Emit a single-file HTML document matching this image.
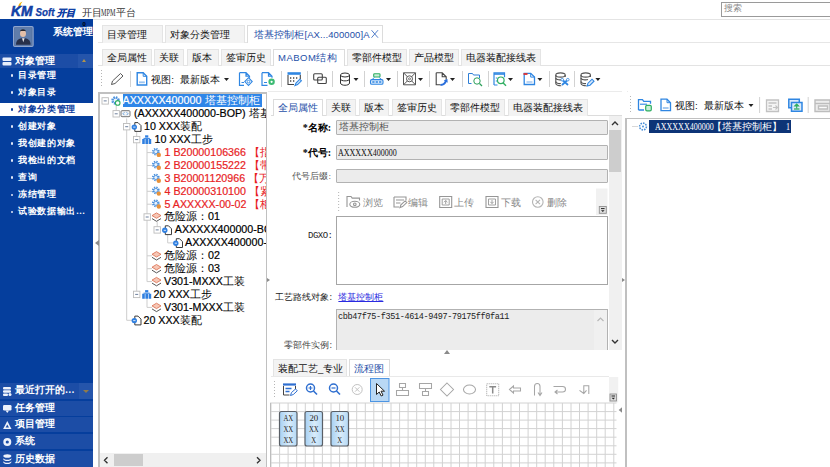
<!DOCTYPE html>
<html>
<head>
<meta charset="utf-8">
<style>
*{box-sizing:border-box;margin:0;padding:0}
html,body{width:830px;height:467px;overflow:hidden;background:#fff}
body{font-family:"Liberation Sans",sans-serif;font-size:10px;color:#000;position:relative}
.a{position:absolute;white-space:nowrap}
.sf{font-family:"Liberation Serif",serif}
.mf{font-family:"Liberation Mono",monospace}
/* sidebar */
#side{left:0;top:18.500px;width:93.250px;height:448px;background:#053e9d}
.sh{left:0;width:93.250px;height:15px;background:#1c4da6;color:#fff;font-weight:bold;font-size:9.5px;line-height:15px}
.sh span{position:absolute;left:15px;top:0;letter-spacing:0}
.si{left:0;width:93.250px;height:17px;color:#fff;font-weight:bold;font-size:9px;line-height:17px;letter-spacing:.6px}
.si i{position:absolute;left:10.500px;top:7.200px;width:2.600px;height:2.600px;border-radius:2px;background:#dfe6f5}
.si span{position:absolute;left:18.300px;top:0}
.si.sel{background:#fff;color:#0a3b9d}
.si.sel i{background:#0a3b9d}
/* tabs */
.tab{height:17px;background:#f3f3f3;border:1px solid #e4e4e4;border-bottom:none;font-size:9.5px;line-height:16px;text-align:left;padding-left:4px;color:#111}
.tab.on{background:#fff;color:#1e4fa8;border-color:#dcdcdc}
.sep{width:1px;height:16px;background:#c9c9c9}
.dd{width:0;height:0;border-left:2.5px solid transparent;border-right:2.5px solid transparent;border-top:3px solid #222}
.inp{background:#ececec;border:1px solid #b2b2b2;border-radius:1px;font-size:9.5px;line-height:13px;padding-left:2px;color:#222}
.lbl{font-size:10px;text-align:right;width:70px}
.tr{font-size:10.7px;line-height:13px;height:13px;-webkit-text-stroke:.2px currentColor}
.tr b{font-weight:normal;-webkit-text-stroke:0}
.red{color:#e8231f}
</style>
</head>
<body>
<!-- header -->
<div class="a" id="hdr" style="left:0;top:0;width:830px;height:19px;background:#fff"></div>
<div class="a" style="left:721px;top:1.500px;width:112px;height:15px;border:1px solid #9a9a9a;background:#fff"></div>
<div class="a sf" style="left:724px;top:2px;font-size:9px;color:#8a8a8a;line-height:12px">搜索</div>
<div class="a sf" style="left:82px;top:6.500px;font-size:9.500px;color:#333;line-height:12px">开目</div><div class="a sf" id="h2" style="left:101px;top:6.500px;font-size:9.500px;color:#333;line-height:12px;transform-origin:0 50%;transform:scaleX(.65)">MPM</div><div class="a sf" style="left:116px;top:6.500px;font-size:9.500px;color:#333;line-height:12px">平台</div>
<svg class="a" style="left:8px;top:0px" width="70" height="19" viewBox="8 0 70 19">
  <path d="M18 7.600Q18.300 3 22.500 1.600Q20 4 20.200 7.800Z" fill="#f2b400"/>
  <text x="11" y="16.300" font-family="Liberation Sans" font-style="italic" font-weight="bold" font-size="15.300" fill="#1241a6" stroke="#1241a6" stroke-width=".6" textLength="21.500" lengthAdjust="spacingAndGlyphs">KM</text>
  <text x="35.500" y="16.300" font-family="Liberation Sans" font-style="italic" font-weight="bold" font-size="10" fill="#1241a6" stroke="#1241a6" stroke-width=".25" textLength="19" lengthAdjust="spacingAndGlyphs">Soft</text>
  <text x="56.500" y="16" font-family="Liberation Sans" font-style="italic" font-weight="bold" font-size="9.200" fill="#1241a6" stroke="#1241a6" stroke-width=".35">开目</text>
</svg>
<div class="a" style="left:82.500px;top:21px;font-size:6px;line-height:6px;color:#000;z-index:4;font-weight:bold">0</div>

<!-- sidebar -->
<div class="a" id="side"></div>
<svg class="a" style="left:13px;top:25px" width="21" height="22" viewBox="0 0 21 22">
<rect x=".6" y="1.600" width="19.500" height="19.800" rx="1.200" fill="#4f6c9c" stroke="#8fa5cd" stroke-width="1.200"/>
<rect x="2" y="3" width="16.700" height="17" fill="#5f7dab"/>
<ellipse cx="10" cy="8.500" rx="3" ry="3.600" fill="#e3bfa8"/>
<path d="M6.800 7.200c0-4 6.400-4 6.400 0l-.5-1.200h-5.400z" fill="#2a2a30"/>
<path d="M3 19.700c0-5 3-6.500 7.300-6.500s7.300 1.500 7.300 6.500z" fill="#27304a"/>
<path d="M9 13.200h2.600l-1.300 4z" fill="#e9e9ee"/>
</svg>
<div class="a sf" style="left:52.5px;top:26px;font-size:10px;font-weight:bold;color:#fff;line-height:12px;letter-spacing:.3px">系统管理</div>

<div class="a sh" style="top:53.900px;height:14px;line-height:14px"><span class="sf">对象管理</span></div>
<div class="a" style="left:78px;top:53.900px;width:15.250px;height:14px;background:#2555ab"></div>
<div class="a" style="left:82px;top:59px;width:0;height:0;border-left:2.600px solid transparent;border-right:2.600px solid transparent;border-bottom:3px solid #b0934c"></div>
<svg class="a" style="left:2px;top:56.500px" width="10" height="9" viewBox="0 0 10 9"><rect x="0.5" y="0.5" width="9" height="3.5" rx="1" fill="#e8eefb"/><rect x="0.5" y="5" width="9" height="3.5" rx="1" fill="#e8eefb"/></svg>

<div class="a si sf" style="top:67.0px;background:none"><i></i><span>目录管理</span></div>
<div class="a si sf" style="top:84.0px;background:none"><i></i><span>对象目录</span></div>
<div class="a" style="left:0;top:103.400px;width:93.250px;height:13px;background:#fff"></div>
<div class="a si sf sel" style="top:101.1px;background:none"><i></i><span>对象分类管理</span></div>
<div class="a si sf" style="top:118.2px;background:none"><i></i><span>创建对象</span></div>
<div class="a si sf" style="top:135.2px;background:none"><i></i><span>我创建的对象</span></div>
<div class="a si sf" style="top:152.2px;background:none"><i></i><span>我检出的文档</span></div>
<div class="a si sf" style="top:169.3px;background:none"><i></i><span>查询</span></div>
<div class="a si sf" style="top:186.4px;background:none"><i></i><span>冻结管理</span></div>
<div class="a si sf" style="top:203.4px;background:none"><i></i><span>试验数据输出…</span></div>
<div class="a sh" style="top:383.3px;height:15.5px;line-height:15.5px"><svg class="a" style="left:3px;top:3px" width="9" height="10" viewBox="0 0 9 10"><rect x="0" y="1" width="8" height="2.600" rx="1" fill="#eef2fb"/><rect x="0" y="4.200" width="8" height="2.600" rx="1" fill="#eef2fb"/><rect x="0" y="7.400" width="5" height="2.600" rx="1" fill="#eef2fb"/><circle cx="7" cy="8.500" r="1.500" fill="#eef2fb"/></svg><span class="sf">最近打开的…</span></div>
<div class="a" style="left:78.700px;top:383.300px;width:14.550px;height:15.500px;background:#2555ab"></div>
<div class="a" style="left:82.500px;top:389.500px;width:0;height:0;border-left:3px solid transparent;border-right:3px solid transparent;border-top:3px solid #8f7b4c"></div>
<div class="a sh" style="top:400.6px;height:15.2px;line-height:15.2px"><svg class="a" style="left:3px;top:4px" width="9" height="9" viewBox="0 0 9 9"><rect x="0" y="0" width="8.500" height="5.500" rx="1.200" fill="#eef2fb"/><path d="M2.500 5.500h3.500l-1.700 2.500z" fill="#eef2fb"/></svg><span class="sf">任务管理</span></div>
<div class="a sh" style="top:417.3px;height:15.2px;line-height:15.2px"><svg class="a" style="left:3px;top:3px" width="9" height="10" viewBox="0 0 9 10"><path d="M4.300 1l4.200 8h-8.400z" fill="#eef2fb"/><path d="M4.300 4.500l1.700 3h-3.400z" fill="#1c4da6"/></svg><span class="sf">项目管理</span></div>
<div class="a sh" style="top:434px;height:15.4px;line-height:15.4px"><svg class="a" style="left:3px;top:3px" width="9" height="10" viewBox="0 0 9 10"><circle cx="4.300" cy="5" r="4" fill="#eef2fb"/><circle cx="4.300" cy="5" r="1.600" fill="#1c4da6"/></svg><span class="sf">系统</span></div>
<div class="a sh" style="top:450.8px;height:16.2px;line-height:16.2px"><svg class="a" style="left:3px;top:3px" width="9" height="10" viewBox="0 0 9 10"><ellipse cx="4.300" cy="2" rx="4" ry="1.800" fill="#eef2fb"/><path d="M.3 4c0 2.400 8 2.400 8 0v1.300c0 2.400-8 2.400-8 0zM.3 7c0 2.400 8 2.400 8 0v1.300c0 2.400-8 2.400-8 0z" fill="#eef2fb"/></svg><span class="sf">历史数据</span></div>

<!-- MAIN -->
<div class="a" id="main" style="left:93px;top:19px;width:737px;height:448px;background:#fff"></div>
<div class="a" style="left:93.250px;top:19px;width:737px;height:1px;background:#e4e4e4"></div>
<div class="a" style="left:93.250px;top:20px;width:5px;height:447px;background:#fff"></div>
<div class="a" style="left:94.700px;top:240px;width:0;height:0;border-top:3.750px solid transparent;border-bottom:3.750px solid transparent;border-right:4px solid #8c8c8c;z-index:5"></div>
<!-- top tabs -->
<div class="a" style="left:98px;top:42px;width:732px;height:1px;background:#e6e6e6"></div>
<div class="a tab" style="left:102px;top:25px;width:61px;height:18px;line-height:18px">目录管理</div>
<div class="a tab" style="left:165px;top:25px;width:80px;height:18px;line-height:18px">对象分类管理</div>
<div class="a tab on" style="left:247px;top:25px;width:136px;height:18px;line-height:18px;padding-left:6px;letter-spacing:.09px"><span id="t3">塔基控制柜[AX...400000]A</span></div>
<svg class="a" style="left:370px;top:29px" width="10" height="10" viewBox="0 0 10 10"><path d="M1.500 1.200l6.500 7.500M8 1.200l-6.500 7.500" stroke="#3f6fc4" stroke-width=".9" fill="none"/></svg>
<!-- 2nd tabs -->
<div class="a" style="left:98px;top:65px;width:732px;height:1px;background:#e3e3e3"></div>
<div class="a tab" style="left:102px;top:49px;width:50px">全局属性</div>
<div class="a tab" style="left:154px;top:49px;width:30px">关联</div>
<div class="a tab" style="left:187px;top:49px;width:32px">版本</div>
<div class="a tab" style="left:221px;top:49px;width:50px">签审历史</div>
<div class="a tab on" style="left:273px;top:49px;width:72px"><span id="mb" style="letter-spacing:.5px">MABOM结构</span></div>
<div class="a tab" style="left:347px;top:49px;width:60px">零部件模型</div>
<div class="a tab" style="left:409px;top:49px;width:50px">产品模型</div>
<div class="a tab" style="left:461px;top:49px;width:80px">电器装配接线表</div>
<!-- toolbar 1 -->
<div class="a" style="left:98px;top:66px;width:732px;height:25px;background:#fff"></div>
<svg class="a" id="tb1" style="left:98px;top:66px" width="520" height="25" viewBox="98 66 520 25" fill="none" stroke-width="1">
<g stroke="#b5b5b5"><path d="M101.5 70v1M101.5 73v1M101.5 76v1M101.5 79v1M101.5 82v1M101.5 85v1"/></g>
<g stroke="#d2d2d2"><path d="M130.5 71v16M281.5 71v16M307.5 71v16M332.5 71v16M364.5 71v16M397.5 71v16M429.5 71v16M462.5 71v16M488.5 71v16M549.5 71v16M574.5 71v16"/></g>
<!-- pencil -->
<path d="M111.500 84.500l1-3.500 8-7.500 2.500 2.500-8 7.500z" stroke="#444" stroke-width=".9"/>
<!-- doc -->
<path d="M137.200 72.800h6l3.500 3.500v8.700h-9.500z" stroke="#2f86e2" stroke-width="1.400" fill="#fff"/><path d="M143.200 72.800v3.500h3.500" stroke="#2f86e2"/><path d="M139 82.300h5.800" stroke="#9cc5f0" stroke-width="1.800"/>
<!-- doc gear -->
<path d="M239.500 72.700h6.500l3.500 3.500v1.500M239.500 72.700v12.600h4.500M246 72.700v3.500h3.500M241.500 82.500h2.500" stroke="#2f86e2" stroke-width="1.200"/><path d="M248.500 77.700l3.700 3.900-3.700 3.900-3.700-3.900z" stroke="#2f86e2" stroke-width="1.100" fill="#fff"/><circle cx="248.500" cy="81.600" r="1.300" stroke="#2f86e2" stroke-width=".9"/>
<!-- doc green -->
<path d="M262 72.700h6.500l3.500 3.500v1.500M262 72.700v12.600h5.500M268.500 72.700v3.500h3.500M264 82.500h3" stroke="#2f86e2" stroke-width="1.200"/><circle cx="271.600" cy="81.800" r="3.200" fill="#3dbb74"/><circle cx="271.600" cy="81.800" r="1.100" fill="#fff"/>
<!-- calendar -->
<path d="M288 75v9.500h6M300.300 75v4" stroke="#444" stroke-width="1.100"/><path d="M287.500 73.500h13.300" stroke="#2f86e2" stroke-width="2.600"/><path d="M290 78h1.300M293 78h1.300M296 78h1.300M290 81h1.300M293 81h1.300" stroke="#444" stroke-width="1.400"/><path d="M295 85.500l1-2.500 3.800-3.800 1.600 1.600-3.800 3.800z" stroke="#2f86e2" stroke-width="1.100" fill="#cfe4fa"/>
<!-- two squares -->
<rect x="313.700" y="73.800" width="8.600" height="6.200" rx="1" stroke="#444" stroke-width="1.100"/><rect x="317.700" y="77.300" width="8.600" height="6.200" rx="1" stroke="#444" stroke-width="1.100"/>
<!-- cylinder -->
<path d="M340.500 75v8c0 3 9 3 9 0v-8" stroke="#333"/><ellipse cx="345" cy="75" rx="4.500" ry="2" stroke="#333"/><path d="M340.500 79c0 2.500 9 2.500 9 0" stroke="#333"/>
<!-- org -->
<rect x="373.700" y="73.800" width="6.300" height="3.200" rx=".8" stroke="#2fae62" stroke-width="1.100" fill="#c9efd8"/><path d="M374.500 77.500l-2.500 2h9.700l-2.500-2" stroke="#2f86e2" stroke-width=".9"/><rect x="370.500" y="79.600" width="12.500" height="4.600" rx="1.300" stroke="#2f86e2" stroke-width="1.100" fill="#d9e9fb"/><path d="M372.300 81.200h2.200v1.600h-2.200zM375.700 81.200h2.200v1.600h-2.200zM379.100 81.200h2.200v1.600h-2.200z" fill="#2f86e2" stroke="none"/>
<!-- box X -->
<path d="M403.500 72.800h12v12h-12zM403.500 72.800l12 12M415.500 72.800l-12 12" stroke="#555" stroke-width="1"/><circle cx="409.500" cy="78.800" r="3" stroke="#555" fill="#fff"/><circle cx="409.500" cy="78.800" r="1" stroke="#555" stroke-width=".8"/>
<!-- doc arrow -->
<path d="M436.200 72.800h6l4 4v3M436.200 72.800v12h4.500M442.200 72.800v4h4" stroke="#444" stroke-width="1.100"/><path d="M440.500 85q4.500-.3 5.500-4.500" stroke="#2a6fdc" stroke-width="2"/><path d="M443.800 80.200l3.600-1.200.3 3.800z" fill="#2a6fdc" stroke="none"/>
<!-- folder search -->
<path d="M468.500 83.500v-10h4l1 1.500h6v3" stroke="#2f7fd6"/><path d="M468.500 83.500h3" stroke="#2f7fd6"/><circle cx="477" cy="81" r="3.200" stroke="#2ca05a"/><path d="M479.500 83.500l2.500 2.500" stroke="#2ca05a" stroke-width="1.300"/>
<!-- doc search -->
<path d="M494 85v-12.200h10.500v4.500M494 85h3.500" stroke="#2f86e2" stroke-width="1.200"/><path d="M494 74h10.500" stroke="#2f86e2" stroke-width="1.600"/><path d="M495.800 78h1.500M495.800 81h1.500" stroke="#2f86e2"/><circle cx="500.800" cy="80.300" r="3.300" stroke="#2fae62" stroke-width="1.200"/><path d="M503.200 82.900l2.800 2.800" stroke="#2fae62" stroke-width="1.400"/>
<!-- doc red -->
<path d="M524.200 73.300h6.500l3.800 3.800v7.400h-10.300z" stroke="#2f86e2" stroke-width="1.300"/><path d="M530.700 73.300v3.800h3.800" stroke="#2f86e2" stroke-width="1"/><path d="M523.500 74h4" stroke="#e03030" stroke-width="1.800"/><path d="M526.500 82h6" stroke="#8db9ec" stroke-width="1.200"/>
<!-- db tools -->
<g stroke="#555" stroke-width="1.100"><path d="M555.800 75v8.500c0 1.700 3 2.400 5.500 2.300M565.200 75v2"/><ellipse cx="560.500" cy="75" rx="4.700" ry="2.100"/><path d="M555.800 78c0 1.800 5 2.300 7 1.500M555.800 81.500c0 1.800 3 2.300 5 2"/></g><path d="M562 79.500l6 5.500M568 79.500l-6 5.500" stroke="#2f86e2" stroke-width="1.700"/><circle cx="562.200" cy="79.700" r="1.300" fill="#fff" stroke="#2f86e2" stroke-width=".8"/><circle cx="567.800" cy="79.700" r="1.300" fill="#fff" stroke="#2f86e2" stroke-width=".8"/>
<!-- db pencil -->
<g stroke="#555" stroke-width="1.100"><path d="M581 75v8.500c0 1.700 3 2.400 5.500 2.300M590.400 75v2"/><ellipse cx="585.700" cy="75" rx="4.700" ry="2.100"/><path d="M581 78c0 1.800 5 2.300 7 1.500M581 81.500c0 1.800 3 2.300 5 2"/></g><path d="M587.200 86l.8-2.800 4-4 2 2-4 4z" stroke="#2f86e2" stroke-width="1.100" fill="#d9e9fb"/>
<!-- arrows -->
<g fill="#222" stroke="none"><path d="M224 78h5l-2.500 3z"/><path d="M353.500 78h5l-2.500 3z"/><path d="M386 78h5l-2.500 3z"/><path d="M418 78h5l-2.500 3z"/><path d="M450 78h5l-2.500 3z"/><path d="M508 78h5l-2.500 3z"/><path d="M537.400 78h5l-2.500 3z"/><path d="M595.400 78h5l-2.500 3z"/></g>
</svg>
<div class="a" id="v1" style="left:151.300px;top:72.500px;font-size:9.750px;line-height:14px;color:#111">视图:</div><div class="a" id="v2" style="left:180.300px;top:72.500px;font-size:9.750px;line-height:14px;color:#111;letter-spacing:.05px">最新版本</div>
<div class="a" style="left:268px;top:91.300px;width:562px;height:1px;background:#ebebeb"></div>
<!-- TREE -->
<div class="a" style="left:98.200px;top:92.300px;width:169.200px;height:375px;background:#c0c0c0"></div><div class="a" style="left:99.600px;top:93.500px;width:166.600px;height:375px;background:#fff"></div>
<div class="a" id="treeclip" style="left:100px;top:93px;width:166px;height:360px;overflow:hidden">
<svg class="a" style="left:0;top:0" width="166" height="362" viewBox="100 93 166 362" fill="none"><g stroke="#cdcdcd" stroke-width="1"><path d="M116.2 105.5L116.2 113.4"/><path d="M126.7 118.4L126.7 320.3"/><path d="M126.7 320.3L132 320.3"/><path d="M136.7 131.3L136.7 294.0"/><path d="M147 144.2L147 281.6"/><path d="M147 152.6L152.5 152.6"/><path d="M147 165.5L152.5 165.5"/><path d="M147 178.4L152.5 178.4"/><path d="M147 191.3L152.5 191.3"/><path d="M147 204.2L152.5 204.2"/><path d="M147 255.8L152 255.8"/><path d="M147 268.7L152 268.7"/><path d="M147 281.6L152 281.6"/><path d="M157.2 221.6L157.2 229.5"/><path d="M167.7 234.5L167.7 242.9"/><path d="M167.7 242.9L173.5 242.9"/><path d="M147 299.0L147 307.4"/><path d="M147 307.4L152 307.4"/></g><rect x="102.0" y="97.7" width="6.400" height="6.400" fill="#fff" stroke="#bcbcbc" stroke-width=".9"/><path d="M103.7 100.9h3" stroke="#6d7f9c" stroke-width="1"/><circle cx="115.5" cy="100.5" r="3.300" stroke="#4a90dc" stroke-width="1.900" stroke-dasharray="1.500 1.100"/><circle cx="115.5" cy="100.5" r="2.400" stroke="#4a90dc" stroke-width=".9" fill="#eaf3fc"/><circle cx="117.7" cy="102.9" r="2.300" fill="#fff" stroke="#2fae62" stroke-width="1.100"/><rect x="113.0" y="110.6" width="6.400" height="6.400" fill="#fff" stroke="#bcbcbc" stroke-width=".9"/><path d="M114.7 113.8h3" stroke="#6d7f9c" stroke-width="1"/><rect x="121.0" y="110.7" width="9" height="6" rx="1" stroke="#666" fill="#f4f4f4" stroke-width=".9"/><path d="M124.5 112.2l-1.500 1.500 1.500 1.500M126.5 112.2l1.500 1.500 -1.500 1.500" stroke="#4a90dc" stroke-width=".8"/><rect x="123.5" y="123.5" width="6.400" height="6.400" fill="#fff" stroke="#bcbcbc" stroke-width=".9"/><path d="M125.2 126.7h3" stroke="#6d7f9c" stroke-width="1"/><path d="M134.8 122.6h3.200l3 3v5.800h-6.200z" stroke="#333" fill="#fff" stroke-width=".95"/><circle cx="134.3" cy="127.1" r="2.700" fill="#2f7fe0"/><path d="M133.2 127.1h2.300" stroke="#fff" stroke-width=".8"/><rect x="133.5" y="136.4" width="6.400" height="6.400" fill="#fff" stroke="#bcbcbc" stroke-width=".9"/><path d="M135.2 139.6h3" stroke="#6d7f9c" stroke-width="1"/><path d="M145.1 135.29999999999998h3.200v2.300h-3.200z" fill="#2f7fe0"/><path d="M142.2 139.0h2.600v4.900h-2.600zM145.39999999999998 139.0h2.600v4.900h-2.600zM148.6 139.0h2.600v4.900h-2.600z" fill="#2f7fe0"/><path d="M143.5 138.39999999999998h6.400" stroke="#2f7fe0" stroke-width="1"/><circle cx="155.8" cy="151.7" r="2.900" stroke="#4a90dc" stroke-width="1.900" stroke-dasharray="1.300 1"/><circle cx="155.8" cy="151.7" r="2" stroke="#4a90dc" stroke-width=".9" fill="#eaf3fc"/><circle cx="158.8" cy="154.9" r="2.200" fill="#e8923a"/><circle cx="155.8" cy="164.6" r="2.900" stroke="#4a90dc" stroke-width="1.900" stroke-dasharray="1.300 1"/><circle cx="155.8" cy="164.6" r="2" stroke="#4a90dc" stroke-width=".9" fill="#eaf3fc"/><circle cx="158.8" cy="167.8" r="2.200" fill="#e8923a"/><circle cx="155.8" cy="177.5" r="2.900" stroke="#4a90dc" stroke-width="1.900" stroke-dasharray="1.300 1"/><circle cx="155.8" cy="177.5" r="2" stroke="#4a90dc" stroke-width=".9" fill="#eaf3fc"/><circle cx="158.8" cy="180.70000000000002" r="2.200" fill="#e8923a"/><circle cx="155.8" cy="190.4" r="2.900" stroke="#4a90dc" stroke-width="1.900" stroke-dasharray="1.300 1"/><circle cx="155.8" cy="190.4" r="2" stroke="#4a90dc" stroke-width=".9" fill="#eaf3fc"/><circle cx="158.8" cy="193.60000000000002" r="2.200" fill="#e8923a"/><circle cx="155.8" cy="203.29999999999998" r="2.900" stroke="#4a90dc" stroke-width="1.900" stroke-dasharray="1.300 1"/><circle cx="155.8" cy="203.29999999999998" r="2" stroke="#4a90dc" stroke-width=".9" fill="#eaf3fc"/><circle cx="158.8" cy="206.5" r="2.200" fill="#e8923a"/><rect x="144.0" y="213.8" width="6.400" height="6.400" fill="#fff" stroke="#bcbcbc" stroke-width=".9"/><path d="M145.7 217.0h3" stroke="#6d7f9c" stroke-width="1"/><path d="M152.0 215.60000000000002l4.500 -2.700 4.500 2.700 -4.500 2.700z" fill="#f6c7b6" stroke="#d9694a" stroke-width=".8"/><path d="M152.0 218.60000000000002l4.500 2.700 4.500 -2.700" stroke="#444" stroke-width=".9"/><rect x="154.0" y="226.7" width="6.400" height="6.400" fill="#fff" stroke="#bcbcbc" stroke-width=".9"/><path d="M155.7 229.9h3" stroke="#6d7f9c" stroke-width="1"/><path d="M165.3 225.8h3.200l3 3v5.800h-6.200z" stroke="#333" fill="#fff" stroke-width=".95"/><circle cx="164.8" cy="230.3" r="2.700" fill="#2f7fe0"/><path d="M163.7 230.3h2.300" stroke="#fff" stroke-width=".8"/><path d="M176.3 238.70000000000002h3.200l3 3v5.800h-6.200z" stroke="#333" fill="#fff" stroke-width=".95"/><circle cx="175.8" cy="243.20000000000002" r="2.700" fill="#2f7fe0"/><path d="M174.7 243.20000000000002h2.300" stroke="#fff" stroke-width=".8"/><path d="M152.0 254.3l4.500 -2.700 4.500 2.700 -4.500 2.700z" fill="#f6c7b6" stroke="#d9694a" stroke-width=".8"/><path d="M152.0 257.3l4.500 2.700 4.500 -2.700" stroke="#444" stroke-width=".9"/><path d="M152.0 267.20000000000005l4.500 -2.700 4.500 2.700 -4.500 2.700z" fill="#f6c7b6" stroke="#d9694a" stroke-width=".8"/><path d="M152.0 270.20000000000005l4.500 2.700 4.500 -2.700" stroke="#444" stroke-width=".9"/><path d="M152.0 280.1l4.500 -2.700 4.500 2.700 -4.500 2.700z" fill="#f6c7b6" stroke="#d9694a" stroke-width=".8"/><path d="M152.0 283.1l4.500 2.700 4.500 -2.700" stroke="#444" stroke-width=".9"/><rect x="133.5" y="291.2" width="6.400" height="6.400" fill="#fff" stroke="#bcbcbc" stroke-width=".9"/><path d="M135.2 294.4h3" stroke="#6d7f9c" stroke-width="1"/><path d="M145.1 290.1h3.200v2.300h-3.200z" fill="#2f7fe0"/><path d="M142.2 293.8h2.600v4.900h-2.600zM145.39999999999998 293.8h2.600v4.900h-2.600zM148.6 293.8h2.600v4.900h-2.600z" fill="#2f7fe0"/><path d="M143.5 293.2h6.400" stroke="#2f7fe0" stroke-width="1"/><path d="M152.0 305.9l4.500 -2.700 4.500 2.700 -4.500 2.700z" fill="#f6c7b6" stroke="#d9694a" stroke-width=".8"/><path d="M152.0 308.9l4.500 2.700 4.500 -2.700" stroke="#444" stroke-width=".9"/><path d="M134.8 316.1h3.200l3 3v5.800h-6.200z" stroke="#333" fill="#fff" stroke-width=".95"/><circle cx="134.3" cy="320.6" r="2.700" fill="#2f7fe0"/><path d="M133.2 320.6h2.300" stroke="#fff" stroke-width=".8"/></svg>
<div class="a tr" style="left:22.5px;top:1.3px"><span style="background:#2f86e8;color:#fff;display:inline-block;height:12.5px;line-height:12.5px;padding-right:2px;letter-spacing:.05px">AXXXXX400000 <b class="sf">塔基控制柜</b></span></div>
<div class="a tr" style="left:34px;top:14.2px">(AXXXXX400000-BOP) <b class="sf">塔基控制柜</b></div>
<div class="a tr" style="left:44px;top:27.1px">10 XXX<b class="sf">装配</b></div>
<div class="a tr" style="left:54.5px;top:40.0px">10 XXX<b class="sf">工步</b></div>
<div class="a tr" style="left:64.5px;top:52.9px"><span class="red">1 B20000106366 <b class="sf">【指示灯</b></span></div>
<div class="a tr" style="left:64.5px;top:65.8px"><span class="red">2 B20000155222 <b class="sf">【带灯按</b></span></div>
<div class="a tr" style="left:64.5px;top:78.7px"><span class="red">3 B20001120966 <b class="sf">【万能转</b></span></div>
<div class="a tr" style="left:64.5px;top:91.6px"><span class="red">4 B20000310100 <b class="sf">【紧固件</b></span></div>
<div class="a tr" style="left:64.5px;top:104.5px"><span class="red">5 AXXXXX-00-02 <b class="sf">【柜体</b></span></div>
<div class="a tr" style="left:64px;top:117.4px"><b class="sf">危险源：</b>01</div>
<div class="a tr" style="left:74.80000000000001px;top:130.3px">AXXXXX400000-BOP</div>
<div class="a tr" style="left:85px;top:143.2px">AXXXXX400000-BOP1</div>
<div class="a tr" style="left:64px;top:156.1px"><b class="sf">危险源：</b>02</div>
<div class="a tr" style="left:64px;top:169.0px"><b class="sf">危险源：</b>03</div>
<div class="a tr" style="left:64px;top:181.9px">V301-MXXX<b class="sf">工装</b></div>
<div class="a tr" style="left:53.5px;top:194.8px">20 XXX<b class="sf">工步</b></div>
<div class="a tr" style="left:64px;top:207.7px">V301-MXXX<b class="sf">工装</b></div>
<div class="a tr" style="left:43.5px;top:220.6px">20 XXX<b class="sf">装配</b></div>
</div>
<div class="a" style="left:99.600px;top:453px;width:166.600px;height:14px;background:#f0f0f0"></div>
<div class="a" style="left:114px;top:453.700px;width:29.300px;height:12px;background:#cdcdcd"></div>
<svg class="a" style="left:100px;top:454px" width="166" height="12" viewBox="0 0 166 12" fill="none" stroke="#333" stroke-width="1.400"><path d="M7.500 3.200l-3 3 3 3M157 3.200l3 3-3 3"/></svg>
<div class="a" style="left:266.500px;top:277.700px;width:0;height:0;border-top:2.600px solid transparent;border-bottom:2.600px solid transparent;border-left:3.500px solid #8a8a8a;z-index:5"></div>
<!-- MID -->
<div class="a" style="left:271px;top:115px;width:352px;height:1px;background:#dcdcdc"></div>
<div class="a tab on" style="left:273px;top:99px;width:50px;height:17px;line-height:16px">全局属性</div>
<div class="a tab" style="left:326px;top:99px;width:30px;height:17px;line-height:16px">关联</div>
<div class="a tab" style="left:359px;top:99px;width:30px;height:17px;line-height:16px">版本</div>
<div class="a tab" style="left:392px;top:99px;width:50px;height:17px;line-height:16px">签审历史</div>
<div class="a tab" style="left:445px;top:99px;width:60px;height:17px;line-height:16px">零部件模型</div>
<div class="a tab" style="left:508px;top:99px;width:80px;height:17px;line-height:16px">电器装配接线表</div>
<div class="a" style="left:271px;top:116px;width:339px;height:233.500px;background:#fff"></div>
<!-- v scrollbar -->
<div class="a" style="left:608.600px;top:116px;width:13.100px;height:233.500px;background:#f0f0f0"></div>
<div class="a" style="left:609.300px;top:130.300px;width:11.900px;height:42px;background:#cdcdcd"></div>
<svg class="a" style="left:609.200px;top:116px" width="12" height="234" viewBox="0 0 12 234" fill="none" stroke="#333" stroke-width="1.4"><path d="M3 9l3-3 3 3M3 224l3 3 3-3"/></svg>
<!-- fields -->
<div class="a sf" style="left:261px;top:121px;width:70px;text-align:right;font-size:10px;font-weight:bold;line-height:13px">*名称:</div>
<div class="a inp sf" style="left:336px;top:120px;width:272px;height:15px;color:#555">塔基控制柜</div>
<div class="a sf" style="left:261px;top:146px;width:70px;text-align:right;font-size:10px;font-weight:bold;line-height:13px">*代号:</div>
<div class="a inp sf" style="left:336px;top:144.500px;width:272px;height:15px"></div>
<div class="a sf" id="f2" style="left:337.500px;top:145.500px;color:#111;font-size:10px;line-height:13px;transform-origin:0 50%;transform:scaleX(.8)">AXXXXX400000</div>
<div class="a sf" style="left:261px;top:170px;width:70px;text-align:right;font-size:9.200px;line-height:13px;color:#555">代号后缀:</div>
<div class="a inp" style="left:336px;top:168.500px;width:272px;height:14.500px"></div>
<!-- mini toolbar -->
<svg class="a" style="left:336px;top:188px" width="272" height="28" viewBox="336 188 272 28" fill="none" stroke="#969696" stroke-width="1.100">
<rect x="596" y="188.500" width="11.500" height="26.500" fill="#f1f1f1" stroke="none"/>
<path d="M338.600 192v1M338.600 195v1M338.600 198v1M338.600 201v1M338.600 204v1M338.600 207v1M338.600 210v1" stroke="#bbb"/>
<path d="M347 207v-10.500h4l1.200 1.600h7.300v2.500"/><ellipse cx="354.800" cy="204.300" rx="5" ry="3"/><circle cx="354.800" cy="204.300" r="1.300"/>
<path d="M394 197h12v3.500M394 197v10h5M396 200h8M396 203h4.500"/><path d="M400 207.500l.9-2.600 4.200-4 1.700 1.700-4.200 4z"/>
<path d="M439.700 196.500h12v11h-12z"/><path d="M442.200 199h7v6h-7z" stroke-width=".9"/><path d="M445.700 204v-3.500M444 202.200l1.700-1.700 1.700 1.700" stroke-width=".9"/>
<path d="M486 196.500h12v11h-12z"/><path d="M488.500 199h7v6h-7z" stroke-width=".9"/><path d="M492 200v3.500M490.300 201.800l1.700 1.700 1.700-1.700" stroke-width=".9"/>
<circle cx="537.800" cy="202" r="5.300" stroke="#b5b5b5"/><path d="M535.600 199.800l4.400 4.400M540 199.800l-4.400 4.400" stroke="#b5b5b5"/>
<rect x="599.300" y="206.500" width="7" height="6.800" fill="#e0e0e0" stroke="#8f8f8f" stroke-width=".9"/><path d="M601 208.600h3.600" stroke="#222" stroke-width="1"/><path d="M601 210.200h3.600l-1.800 1.900z" fill="#222" stroke="none"/>
</svg>
<div class="a" style="left:362.500px;top:196.500px;font-size:9.5px;line-height:12px;color:#8a8a8a">浏览</div>
<div class="a" style="left:408.300px;top:196.500px;font-size:9.5px;line-height:12px;color:#8a8a8a">编辑</div>
<div class="a" style="left:454.300px;top:196.500px;font-size:9.5px;line-height:12px;color:#8a8a8a">上传</div>
<div class="a" style="left:500.700px;top:196.500px;font-size:9.5px;line-height:12px;color:#8a8a8a">下载</div>
<div class="a" style="left:547px;top:196.500px;font-size:9.5px;line-height:12px;color:#8a8a8a">删除</div>
<div class="a" style="left:336px;top:216px;width:272px;height:69px;background:#fff;border:1px solid #a6a6a6"></div>
<div class="a mf" style="left:308px;top:230px;font-size:9px;line-height:12px;color:#222;letter-spacing:-.5px">DGXO:</div>
<div class="a sf" style="left:262px;top:291px;width:70px;text-align:right;font-size:9.300px;line-height:13px;color:#222">工艺路线对象:</div>
<div class="a sf" style="left:338.400px;top:291px;font-size:9.300px;line-height:13px;color:#2a2ae0;text-decoration:underline">塔基控制柜</div>
<div class="a" style="left:336px;top:309px;width:272px;height:40.500px;background:#ececec;border:1px solid #b2b2b2;border-bottom:none"></div>
<div class="a mf" style="left:338px;top:311px;font-size:8.5px;line-height:12px;color:#222;letter-spacing:-.35px">cbb47f75-f351-4614-9497-79175ff0fa11</div>
<div class="a" style="left:593.500px;top:310px;width:13.500px;height:39.500px;background:#f0f0f0"></div><svg class="a" style="left:593px;top:310px" width="14" height="40" viewBox="0 0 14 40" fill="none" stroke="#b8b8b8" stroke-width="1.200"><path d="M4.500 11l3-3 3 3"/></svg>
<div class="a sf" style="left:262px;top:339px;width:70px;text-align:right;font-size:9.300px;line-height:13px;color:#444">零部件实例:</div>
<!-- splitter -->
<div class="a" style="left:271px;top:349.500px;width:352px;height:10px;background:#fff"></div>
<div class="a" style="left:443.500px;top:350px;width:0;height:0;border-left:3.5px solid transparent;border-right:3.5px solid transparent;border-bottom:4px solid #8a8a8a"></div>
<!-- lower tabs -->
<div class="a" style="left:271px;top:359px;width:352px;height:18px;background:#fff"></div>
<div class="a tab" style="left:273px;top:359px;width:74px;height:17px;line-height:18px">装配工艺_专业</div>
<div class="a tab on" style="left:349px;top:359px;width:41px;height:17px;line-height:18px">流程图</div>
<div class="a" style="left:271px;top:376px;width:338px;height:1px;background:#e9e9e9"></div>
<svg class="a" id="tb2" style="left:270px;top:377px" width="353" height="90" viewBox="270 377 353 90" fill="none">
<defs><linearGradient id="ng" x1="0" x2="1" y1="0" y2="0"><stop offset="0" stop-color="#a6d0f3"/><stop offset=".55" stop-color="#d9ecfa"/><stop offset="1" stop-color="#b4d8f5"/></linearGradient></defs>
<rect x="270" y="403" width="346.500" height="64" fill="#fff"/><rect x="609" y="376.700" width="9.200" height="25.700" fill="#f1f1f1"/>
<path d="M271.0 403V467M279.6 403V467M288.1 403V467M296.7 403V467M305.3 403V467M313.9 403V467M322.4 403V467M331.0 403V467M339.6 403V467M348.1 403V467M356.7 403V467M365.3 403V467M373.8 403V467M382.4 403V467M391.0 403V467M399.6 403V467M408.1 403V467M416.7 403V467M425.3 403V467M433.8 403V467M442.4 403V467M451.0 403V467M459.5 403V467M468.1 403V467M476.7 403V467M485.2 403V467M493.8 403V467M502.4 403V467M511.0 403V467M519.5 403V467M528.1 403V467M536.7 403V467M545.2 403V467M553.8 403V467M562.4 403V467M571.0 403V467M579.5 403V467M588.1 403V467M596.7 403V467M605.2 403V467M613.8 403V467M270 403.0H616.500M270 411.6H616.500M270 420.1H616.500M270 428.6H616.500M270 437.2H616.500M270 445.8H616.500M270 454.3H616.500M270 462.9H616.500" stroke="#d2d2d2" stroke-width="1"/>
<path d="M270.500 403v64" stroke="#bdbdbd"/>
<g stroke="#5a5f66" stroke-width="1.200" fill="url(#ng)"><rect x="279.500" y="411.500" width="17.500" height="34.500" rx="2"/><rect x="305" y="411.500" width="17.500" height="34.500" rx="2"/><rect x="331" y="411.500" width="17.500" height="34.500" rx="2"/></g>
<g font-family="Liberation Serif" font-size="9" fill="#222" text-anchor="middle" stroke="none">
<text x="288.300" y="420.500" textLength="9.8" lengthAdjust="spacingAndGlyphs">AX</text><text x="288.300" y="431.500" textLength="9.8" lengthAdjust="spacingAndGlyphs">XX</text><text x="288.300" y="442.500" textLength="9.8" lengthAdjust="spacingAndGlyphs">XX</text>
<text x="313.800" y="420.500" textLength="8.8" lengthAdjust="spacingAndGlyphs">20</text><text x="313.800" y="431.500" textLength="9.8" lengthAdjust="spacingAndGlyphs">XX</text><text x="313.800" y="442.500" textLength="4.9" lengthAdjust="spacingAndGlyphs">X</text>
<text x="339.800" y="420.500" textLength="8.8" lengthAdjust="spacingAndGlyphs">10</text><text x="339.800" y="431.500" textLength="9.8" lengthAdjust="spacingAndGlyphs">XX</text><text x="339.800" y="442.500" textLength="4.9" lengthAdjust="spacingAndGlyphs">X</text></g>
<path d="M274.500 381v1M274.500 384v1M274.500 387v1M274.500 390v1M274.500 393v1M274.500 396v1" stroke="#b5b5b5"/>
<!-- icon1 -->
<path d="M283 384.500h13" stroke="#2f6fd0" stroke-width="2.200"/><path d="M283.500 386v9h6M295.500 386v3" stroke="#444"/><path d="M285.500 388.500h6M285.500 391.500h4" stroke="#2f6fd0" stroke-width="1.300"/><path d="M290.500 395.500l1-3 4-3.500 1.800 1.800-4 3.700z" stroke="#2f6fd0"/>
<!-- zoom in/out -->
<circle cx="310.500" cy="388" r="4" stroke="#2f6fd0" stroke-width="1.500"/><path d="M313.500 391l3.500 3.500" stroke="#2f6fd0" stroke-width="1.600"/><path d="M308.500 388h4M310.500 386v4" stroke="#2f6fd0" stroke-width="1.200"/>
<circle cx="333.500" cy="388" r="4" stroke="#2f6fd0" stroke-width="1.500"/><path d="M336.500 391l3.500 3.500" stroke="#2f6fd0" stroke-width="1.600"/><path d="M331.500 388h4" stroke="#2f6fd0" stroke-width="1.200"/>
<circle cx="357.200" cy="389.500" r="5" stroke="#c2c2c2"/><path d="M355 387.300l4.400 4.400M359.400 387.300l-4.400 4.400" stroke="#c2c2c2"/>
<rect x="370.500" y="378.500" width="18.500" height="23" fill="#b9d8f5" stroke="#4d95e3"/>
<path d="M376.500 383.500v11l2.700-2.500 2 4 1.800-.9-2-3.900h3.500z" fill="#fff" stroke="#222" stroke-width="1"/>
<g stroke="#a6a6a6" stroke-width="1.050">
<path d="M399.500 383.500h6v4h-6zM402.500 387.500v3M396.500 390.500h12v5h-12z"/>
<path d="M419.500 383.500h12v5h-12zM425.500 388.500v3M422.500 391.500h6v4h-6z"/>
<path d="M447 383l6.500 6.500-6.500 6.500-6.500-6.500z"/>
<ellipse cx="469.500" cy="389.500" rx="6" ry="4.500"/>
<path d="M486.700 383.700h12v12h-12z" stroke-dasharray="1 1"/><path d="M489.300 386.700h6.800M492.700 386.700v6.800" stroke="#8a8a8a" stroke-width="1.500"/>
<path d="M509.500 389.500l4-3.500v2h7v3h-7v2z"/>
<path d="M534.500 395.500v-9c0-4 5.500-4 5.500 0v9M538 392.500l2 3 2-3" />
<path d="M553.500 386.500h9c4 0 4 5.500 0 5.500h-7M557.500 390l-2.500 2 2.500 2"/>
<path d="M588.800 394v-8.200h-5v7.500M579.500 390.300l4.300 3.200 2.700-3.200"/>
</g>
<rect x="610" y="394" width="6.500" height="7" fill="#dcdcdc" stroke="#8f8f8f" stroke-width=".9"/><path d="M611.500 396h3.600" stroke="#222" stroke-width="1"/><path d="M611.500 397.700h3.600l-1.800 1.900z" fill="#222" stroke="none"/>
<path d="M622 407.300l-3.300 2.700 3.300 2.700z" fill="#8a8a8a"/>
</svg>
<!-- RIGHT -->
<div class="a" style="left:621.700px;top:91px;width:5px;height:376px;background:#fff"></div>
<div class="a" style="left:622px;top:277.500px;width:0;height:0;border-top:2.600px solid transparent;border-bottom:2.600px solid transparent;border-left:3.200px solid #8a8a8a;z-index:5"></div>
<div class="a" style="left:628px;top:91px;width:202px;height:27px;background:#fff"></div>
<svg class="a" style="left:628px;top:92px" width="202" height="26" viewBox="628 92 202 26" fill="none">
<path d="M630.500 96v1M630.500 99v1M630.500 102v1M630.500 105v1M630.500 108v1M630.500 111v1" stroke="#b5b5b5"/>
<path d="M759.600 97v16M808.200 97v16" stroke="#d2d2d2"/>
<path d="M638.500 110v-10.300h4l1.200 1.600h6.800v2.500M638.500 110h5.500" stroke="#2f86e2" stroke-width="1.300"/><path d="M640 104.200h7" stroke="#2f86e2" stroke-width="1.100"/><rect x="645.700" y="105.300" width="5.600" height="5.600" rx="1.300" fill="#c9efd8" stroke="#2fae62" stroke-width="1.200"/>
<path d="M661 99.200h6l3.500 3.500v8h-9.500z" stroke="#2f86e2" stroke-width="1.300" fill="#fff"/><path d="M667 99.200v3.500h3.500" stroke="#2f86e2"/><path d="M662.800 108h5.800" stroke="#9cc5f0" stroke-width="1.800"/>
<path d="M748.500 104h5l-2.500 3z" fill="#222"/>
<g stroke="#c2c2c2" stroke-width="1.300"><path d="M766.500 100h12v11.500h-12z" fill="#f4f4f4"/><path d="M768.500 103h8M768.500 106h3.500M768.500 109h3.500"/><path d="M773 107.500h4M775.500 105.500l2 2-2 2" stroke-width="1.100"/></g>
<path d="M788.800 99.300h10.500v8.500h-10.500z" stroke="#2f86e2" stroke-width="1.500" fill="#dcebfb"/><path d="M791.500 102.500h10.500v8.800h-10.500z" stroke="#2f86e2" stroke-width="1.500" fill="#dcebfb"/><path d="M794 109h5.500" stroke="#2fae62" stroke-width="1.300"/><path d="M796.700 108.500v-4M794.800 106l1.900-2 1.900 2z" stroke="#2fae62" stroke-width="1.100" fill="#2fae62"/>
<g stroke="#bdbdbd" stroke-width="1.400"><path d="M815 100h15v11.500h-15z" fill="#ededed"/><path d="M815 103.500h15"/><path d="M818.500 106h9v3h-9z" fill="#fafafa"/></g>
</svg>
<div class="a" id="v3" style="left:675px;top:98.800px;font-size:9.750px;line-height:14px;color:#111">视图:</div><div class="a" id="v4" style="left:703.500px;top:98.800px;font-size:9.750px;line-height:14px;color:#111;letter-spacing:.05px">最新版本</div>
<div class="a" style="left:625.100px;top:117.600px;width:205px;height:350px;background:#c0c0c0"></div><div class="a" style="left:626.700px;top:118.800px;width:204px;height:349px;background:#fff"></div>
<svg class="a" style="left:630px;top:120px" width="20" height="13" viewBox="630 120 20 13" fill="none"><path d="M632.500 126.500h6" stroke="#b0b0b0" stroke-dasharray="1 1"/><circle cx="643" cy="126.500" r="3.400" stroke="#4a8fd8" stroke-width="1.500" stroke-dasharray="1.600 1"/><circle cx="643" cy="126.500" r="1" fill="#4a8fd8"/></svg>
<div class="a" style="left:649px;top:120px;width:142px;height:12.500px;background:#0d3477"></div>
<div class="a sf" id="r1" style="left:655px;top:120.500px;color:#fff;font-size:10px;line-height:12px;transform-origin:0 50%;transform:scaleX(.8)">AXXXXX400000</div>
<div class="a sf" id="r2" style="left:711.700px;top:120.500px;color:#fff;font-size:9.860px;line-height:12px">【塔基控制柜】</div>
<div class="a sf" id="r3" style="left:786px;top:120.500px;color:#fff;font-size:10px;line-height:12px;transform-origin:0 50%;transform:scaleX(.8)">1</div>
</body>
</html>
